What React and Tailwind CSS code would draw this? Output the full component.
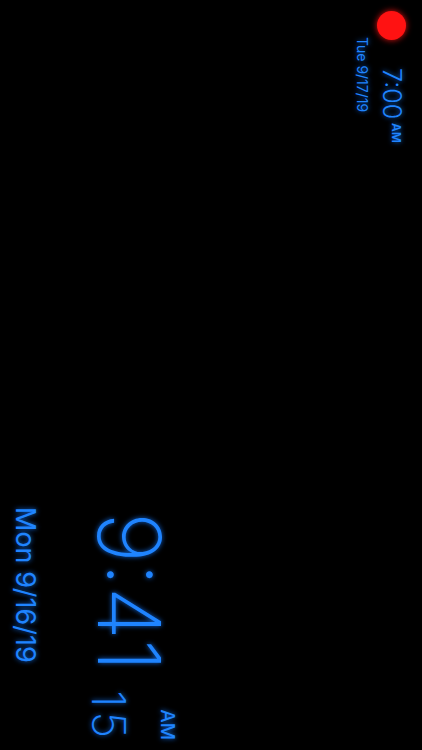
import React from "react";

const glow = "[text-shadow:0_0_5px_rgba(20,120,255,0.85)]";

export default function App() {
    return (
        <div className="w-[422px] h-[750px] bg-black overflow-hidden">
            {/* the whole screen is a landscape layout turned on its side */}
            <div className="w-[750px] h-[422px] origin-top-left rotate-90 translate-x-[422px] flex flex-col justify-between text-[#1f84ff] font-['Inter',sans-serif]">
                {/* alarm corner */}
                <div className="pl-[11px] pt-[16px] flex flex-col">
                    <div className="flex items-start">
                        <div className="w-[29px] h-[29px] rounded-full bg-[#ff1212] shadow-[0_0_6px_rgba(255,20,20,0.9)]" />
                        <div className={`ml-[28px] mt-[2px] flex items-start ${glow}`}>
                            <span className="text-[25px] font-light leading-none">7:00</span>
                            <span className="ml-[4px] mt-[2px] text-[12px] font-semibold leading-none">AM</span>
                        </div>
                    </div>
                    <div className={`ml-[26px] mt-[8px] text-[14px] leading-none ${glow}`}>Tue 9/17/19</div>
                </div>

                {/* current time */}
                <div className="ml-[512px] pb-[12px] flex flex-col items-start">
                    <div className={`flex items-end ${glow}`}>
                        <span className="text-[87px] font-extralight leading-none">9:41</span>
                        <div className="ml-[18px] flex flex-col items-end">
                            <span className="mr-[-2px] text-[19px] font-medium leading-none">AM</span>
                            <span className="mt-[26px] mr-[-4px] text-[46px] font-extralight leading-none tracking-[4px]">15</span>
                        </div>
                    </div>
                    <div className={`ml-[-5px] mt-[47px] text-[27px] leading-none ${glow}`}>Mon 9/16/19</div>
                </div>
            </div>
        </div>
    );
}
